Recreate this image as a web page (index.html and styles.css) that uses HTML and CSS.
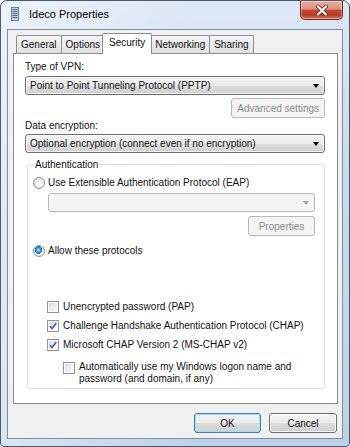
FILE: index.html
```html
<!DOCTYPE html>
<html lang="en">
    <head>
        <meta charset="UTF-8">
        <meta name="viewport" content="width=device-width, initial-scale=1.0">
        <title>Ideco Properties</title>
        <link rel="stylesheet" href="styles.css">
    </head>
    <body>
        <div class="window">
            <div class="titlebar">
                <svg class="app-icon" width="8" height="14" viewBox="0 0 8 14">
                    <rect x="0.5" y="0.5" width="7" height="13" fill="#c9d4e2" stroke="#6f8197"/>
                    <rect x="1.5" y="2" width="5" height="1" fill="#4f6580"/>
                    <rect x="1.5" y="4" width="5" height="1" fill="#4f6580"/>
                    <rect x="1.5" y="6" width="5" height="1" fill="#4f6580"/>
                    <rect x="1.5" y="8" width="5" height="1" fill="#4f6580"/>
                    <rect x="1.5" y="10" width="5" height="1" fill="#4f6580"/>
                </svg>
                <span class="title">Ideco Properties</span>
                <div class="close-btn">
                    <svg width="14" height="11" viewBox="0 0 14 11">
                        <path d="M3 1.5 L11 9.5 M11 1.5 L3 9.5" stroke="#5a2a24" stroke-width="3.8" stroke-linecap="round"/>
                        <path d="M3 1.5 L11 9.5 M11 1.5 L3 9.5" stroke="#ffffff" stroke-width="2.2" stroke-linecap="round"/>
                    </svg>
                </div>
            </div>

            <div class="client">
                <div class="tabs">
                    <div class="tab">General</div>
                    <div class="tab">Options</div>
                    <div class="tab selected">Security</div>
                    <div class="tab">Networking</div>
                    <div class="tab">Sharing</div>
                </div>

                <div class="panel">
                    <div class="label">Type of VPN:</div>
                    <div class="combo">
                        <span>Point to Point Tunneling Protocol (PPTP)</span>
                        <span class="arrow"></span>
                    </div>
                    <div class="btn-row">
                        <button class="btn disabled">Advanced settings</button>
                    </div>

                    <div class="label label-gap">Data encryption:</div>
                    <div class="combo combo-gap">
                        <span>Optional encryption (connect even if no encryption)</span>
                        <span class="arrow"></span>
                    </div>

                    <fieldset class="group">
                        <legend>Authentication</legend>
                        <div class="option first">
                            <span class="radio"></span>
                            <span>Use Extensible Authentication Protocol (EAP)</span>
                        </div>
                        <div class="combo disabled eap">
                            <span></span>
                            <span class="arrow"></span>
                        </div>
                        <div class="btn-row props">
                            <button class="btn disabled">Properties</button>
                        </div>
                        <div class="option allow">
                            <span class="radio checked"></span>
                            <span>Allow these protocols</span>
                        </div>

                        <div class="protocols">
                            <div class="option">
                                <span class="check"></span>
                                <span>Unencrypted password (PAP)</span>
                            </div>
                            <div class="option">
                                <span class="check checked">
                                    <svg width="8" height="8" viewBox="0 0 8 8"><path d="M0.8 4.2 L3 6.6 L7.3 0.9" fill="none" stroke="#4a5f97" stroke-width="1.6"/></svg>
                                </span>
                                <span>Challenge Handshake Authentication Protocol (CHAP)</span>
                            </div>
                            <div class="option">
                                <span class="check checked">
                                    <svg width="8" height="8" viewBox="0 0 8 8"><path d="M0.8 4.2 L3 6.6 L7.3 0.9" fill="none" stroke="#4a5f97" stroke-width="1.6"/></svg>
                                </span>
                                <span>Microsoft CHAP Version 2 (MS-CHAP v2)</span>
                            </div>
                            <div class="option sub">
                                <span class="check"></span>
                                <span>Automatically use my Windows logon name and<br>password (and domain, if any)</span>
                            </div>
                        </div>
                    </fieldset>
                </div>

                <div class="footer">
                    <button class="btn default">OK</button>
                    <button class="btn">Cancel</button>
                </div>
            </div>
        </div>
    </body>
</html>
```

FILE: styles.css
```css
*,
*::before,
*::after {
    box-sizing: border-box;
}

body {
    margin: 0;
    background-color: #ffffff;
    font-family: "Liberation Sans", Arial, sans-serif;
    font-size: 10px;
    color: #111111;
    overflow: hidden;
}

/* window frame */
.window {
    width: 350px;
    height: 447px;
    display: flex;
    flex-direction: column;
    padding: 0 6px 7px 6px;
    border: 1px solid #4e5a68;
    border-radius: 7px 7px 4px 4px;
    background-color: #c6d8ed;
    background-image:
        linear-gradient(90deg, rgba(255, 255, 255, .45) 0%, rgba(255, 255, 255, 0) 55%),
        linear-gradient(180deg, #dde8f5 0%, #cbdcef 35%, #bdd1e9 100%);
}

.titlebar {
    height: 28px;
    flex-shrink: 0;
    display: flex;
    align-items: flex-start;
}

.app-icon {
    margin: 6px 0 0 4px;
}

.title {
    margin: 6px 0 0 10px;
    font-size: 11px;
    line-height: 14px;
    color: #000000;
}

.close-btn {
    margin-left: auto;
    width: 43px;
    height: 19px;
    display: flex;
    align-items: center;
    justify-content: center;
    border: 1px solid #6b2b22;
    border-top: none;
    border-radius: 0 0 5px 5px;
    background-image: linear-gradient(180deg, #eab0a3 0%, #dd8e7d 45%, #c6452d 52%, #bf3b22 80%, #d97e63 100%);
    box-shadow: inset 0 0 0 1px rgba(255, 255, 255, .35);
}

/* client area */
.client {
    flex: 1;
    display: flex;
    flex-direction: column;
    padding: 3px 4px 0 5px;
    border: 1px solid #7c8ea4;
    background-color: #f0f0f0;
}

.tabs {
    height: 20px;
    display: flex;
    align-items: flex-end;
    padding-left: 3px;
}

.tab {
    height: 18px;
    padding: 0 4px;
    margin-right: -1px;
    line-height: 17px;
    white-space: nowrap;
    border: 1px solid #898c95;
    border-bottom: none;
    border-radius: 2px 2px 0 0;
    background-image: linear-gradient(180deg, #f5f5f5 0%, #ebebeb 50%, #dfdfdf 100%);
}

.tab.selected {
    height: 21px;
    margin: 0 -2px -1px -2px;
    padding: 0 6px;
    line-height: 18px;
    background: #ffffff;
    position: relative;
    z-index: 1;
}

.panel {
    height: 351px;
    padding: 6px 12px 0 11px;
    border: 1px solid #898c95;
    background-color: #ffffff;
}

.label {
    line-height: 13px;
}

.label-gap {
    margin-top: 1px;
}

.combo {
    height: 19px;
    margin-top: 3px;
    display: flex;
    align-items: center;
    justify-content: space-between;
    padding: 0 4px;
    line-height: 13px;
    border: 1px solid #707070;
    border-radius: 3px;
    background-image: linear-gradient(180deg, #f3f3f3 0%, #ebebeb 50%, #dddddd 51%, #d0d0d0 100%);
    box-shadow: inset 0 0 0 1px rgba(255, 255, 255, .7);
}

.combo-gap {
    margin-top: 2px;
}

.combo .arrow {
    width: 0;
    height: 0;
    margin-right: 1px;
    border-left: 3px solid transparent;
    border-right: 3px solid transparent;
    border-top: 4px solid #000000;
}

.combo.disabled {
    border-color: #b5b9bc;
    background: #f4f4f4;
    box-shadow: none;
}

.combo.disabled .arrow {
    border-top-color: #a3a3a3;
}

.btn-row {
    display: flex;
    justify-content: flex-end;
    margin-top: 3px;
}

.btn {
    height: 20px;
    min-width: 67px;
    padding: 0 5px;
    font-family: inherit;
    font-size: 10px;
    line-height: 13px;
    color: #111111;
    border: 1px solid #707070;
    border-radius: 3px;
    background-image: linear-gradient(180deg, #f2f2f2 0%, #ebebeb 50%, #dddddd 51%, #cfcfcf 100%);
    box-shadow: inset 0 0 0 1px rgba(255, 255, 255, .75);
}

.btn.disabled {
    color: #8b8b8b;
    border-color: #b5b9bc;
    background: #f4f4f4;
    box-shadow: none;
}

.btn.default {
    border-color: #3c7fb1;
    box-shadow: inset 0 0 0 1px #a8dcf6;
}

/* authentication group */
.group {
    margin: 5px 0 0 2px;
    padding: 0 9px 3px 5px;
    border: 1px solid #d5dfe5;
    border-radius: 3px;
}

.group legend {
    padding: 0 2px;
    line-height: 13px;
}

.option {
    height: 13px;
    display: flex;
    align-items: center;
    gap: 3px;
    line-height: 13px;
    white-space: nowrap;
}

.option.first {
    margin-top: 5px;
}

.eap {
    margin: 4px 0 0 15px;
}

.props {
    margin-top: 4px;
}

.option.allow {
    margin-top: 8px;
}

.radio {
    width: 12px;
    height: 12px;
    flex-shrink: 0;
    border: 1px solid #939494;
    border-radius: 50%;
    background-image: radial-gradient(circle at 60% 60%, #fdfdfd 0%, #e9e9e9 55%, #d2d2d2 100%);
}

.radio.checked {
    background-image:
        radial-gradient(circle at 45% 40%, #c2e8ff 0%, #3e9ee6 26%, #0f5b9e 44%, rgba(15, 91, 158, 0) 48%),
        radial-gradient(circle at 60% 60%, #fdfdfd 0%, #e9e9e9 55%, #d2d2d2 100%);
}

.protocols {
    margin: 43px 0 0 14px;
    display: flex;
    flex-direction: column;
    gap: 6px;
}

.protocols .option {
    gap: 4px;
}

.check {
    width: 12px;
    height: 12px;
    flex-shrink: 0;
    padding: 1px;
    display: grid;
    place-items: center;
    border: 1px solid #939494;
    background: linear-gradient(135deg, #d9dcdf 0%, #f1f1f1 60%, #fbfbfb 100%) content-box, #ffffff;
}

.check svg {
    display: block;
}

.option.sub {
    height: auto;
    margin: 4px 0 0 16px;
    align-items: flex-start;
    line-height: 12px;
}

.option.sub .check {
    margin-top: 1px;
}

/* dialog buttons */
.footer {
    display: flex;
    justify-content: flex-end;
    gap: 8px;
    margin-top: 9px;
    padding-right: 1px;
}

.footer .btn:last-child {
    min-width: 68px;
}
```
